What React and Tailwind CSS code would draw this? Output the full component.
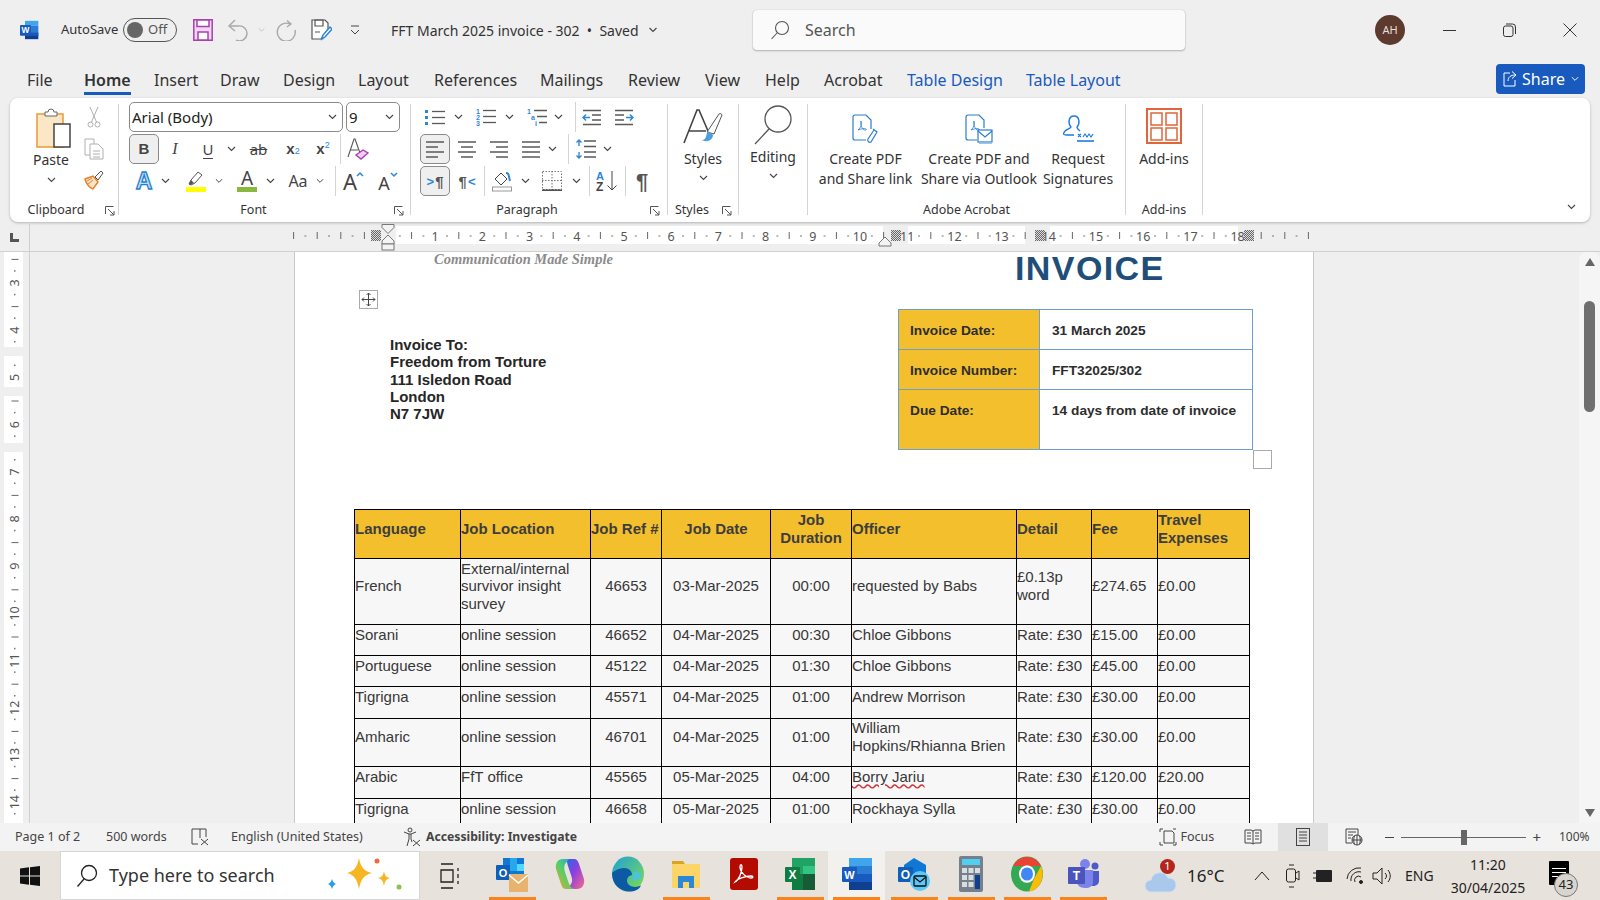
import clsx from 'clsx'

const UI = "font-['Noto_Sans',sans-serif]"
const ARIAL = "font-['Liberation_Sans',Arial,sans-serif]"
const GRAY = '#5a5a5a'
const BLUE = '#2b88d8'

// ---------- small shared icons ----------
const Chev = ({ color = '#444', w = 9 }) => (
  <svg width={w} height="6" viewBox="0 0 9 6"><path d="M1 1l3.5 3.5L8 1" fill="none" stroke={color} strokeWidth="1.1" /></svg>
)
const Launcher = () => (
  <svg width="10" height="10" viewBox="0 0 10 10" fill="none" stroke="#555"><path d="M.5 8V.5h8" /><path d="M3 3l6 6M9 5v4H5" /></svg>
)
const Slot = ({ className, children, active }) => (
  <div className={clsx('flex h-[30px] shrink-0 items-center justify-center', active && 'rounded-[5px] border border-[#8a8a8a] bg-[#efefef]', className)}>{children}</div>
)
const VSep = ({ className }) => <div className={clsx('h-[30px] w-px shrink-0 bg-[#d4d4d4]', className)} />

// ---------- title bar icons ----------
const WordLogo = ({ size = 20 }) => (
  <svg width={size} height={size} viewBox="0 0 24 24" overflow="visible">
    <rect x="6" y="1" width="16" height="6" fill="#41a5ee" />
    <rect x="6" y="7" width="16" height="8" fill="#2b7cd3" />
    <rect x="6" y="15" width="16" height="8" fill="#103f91" />
    <rect x="6" y="15" width="16" height="4" fill="#185abd" />
    <rect x="0" y="6" width="13" height="13" fill="#185abd" rx="1" />
    <text x="6.5" y="16" textAnchor="middle" fontSize="10" fontWeight="700" fill="#fff" fontFamily="Liberation Sans">W</text>
  </svg>
)
const SaveIcon = () => (
  <svg width="20" height="22" viewBox="0 0 20 22"><path d="M.8.8h18.4v20.4H.8z" fill="#f2d7f0" stroke="#a93fb0" strokeWidth="1.5" /><path d="M4 1h12v6.5H4zM5 13h10v8H5z" fill="#fff" stroke="#a93fb0" strokeWidth="1.5" /></svg>
)
const UndoIcon = () => (
  <svg width="22" height="22" viewBox="0 0 22 22" fill="none" stroke="#a8a8a8" strokeWidth="1.4"><path d="M8 1L2 7l6 5" /><path d="M2 7h9a7.5 7.5 0 1 1-2 14" /></svg>
)
const RedoIcon = () => (
  <svg width="22" height="22" viewBox="0 0 22 22" fill="none" stroke="#a8a8a8" strokeWidth="1.4"><path d="M12 1.5l4 3.5-4 3" /><path d="M15 5a9 9 0 1 0 5 6" /></svg>
)
const ReviewIcon = () => (
  <svg width="22" height="22" viewBox="0 0 22 22" fill="none"><path d="M2 1h13l3 3v6l-7 10H2z" fill="#fff" stroke="#555" strokeWidth="1.2" /><path d="M5 1h8v6H5zM5 13h5" stroke="#555" strokeWidth="1.2" /><path d="M12 20l1-4 7-8 2 2-7 8z" fill="#fff" stroke="#2b88d8" strokeWidth="1.5" /></svg>
)

const TitleBar = () => (
  <div className="flex h-[60px] shrink-0 items-center">
    <div className="flex w-[753px] shrink-0 items-center pl-[20px]">
      <WordLogo />
      <span className="ml-[21px] w-[54px] text-[13px] text-[#333]">AutoSave</span>
      <div className="ml-[8px] flex h-[24px] w-[54px] items-center rounded-full border border-[#555] pl-[3px]">
        <div className="h-[16px] w-[16px] rounded-full bg-[#666]" />
        <span className="ml-[5px] text-[13px] text-[#555]">Off</span>
      </div>
      <div className="ml-[16px]"><SaveIcon /></div>
      <div className="ml-[14px]"><UndoIcon /></div>
      <div className="ml-[9px]"><Chev color="#bbb" w={7} /></div>
      <div className="ml-[10px]"><RedoIcon /></div>
      <div className="ml-[13px]"><ReviewIcon /></div>
      <svg className="ml-[18px]" width="10" height="11" viewBox="0 0 10 11" fill="none" stroke="#444"><path d="M1 1h8M1 5l4 4 4-4" /></svg>
      <span className="ml-[31px] text-[14px] text-[#333]">FFT March 2025 invoice - 302 &nbsp;•&nbsp; Saved</span>
      <div className="ml-[8px]"><Chev w={12} /></div>
    </div>
    <div className="flex h-[40px] w-[432px] items-center rounded-[4px] bg-[#fafafa] pl-[17px] shadow-[0_1px_2px_#00000040,0_0_1px_#00000040]">
      <svg width="20" height="20" viewBox="0 0 20 20" fill="none" stroke="#555" strokeWidth="1.1"><circle cx="12" cy="8" r="6.5" /><path d="M7.5 12.5L1.5 19" /></svg>
      <span className="ml-[15px] text-[16px] text-[#555]">Search</span>
    </div>
    <div className="ml-[190px] flex h-[30px] w-[30px] items-center justify-center rounded-full bg-[#5d3a2e] text-[11px] text-[#e8ddd8]">AH</div>
    <div className="ml-[38px] h-px w-[13px] bg-[#333]" />
    <svg className="ml-[47px]" width="13" height="14" viewBox="0 0 13 14" fill="none" stroke="#333"><rect x=".5" y="3" width="9.5" height="10.5" rx="2" /><path d="M3 1h6.5A3 3 0 0 1 12.500 4v7" /></svg>
    <svg className="ml-[47px]" width="14" height="14" viewBox="0 0 14 14" stroke="#333"><path d="M.5.5l13 13M13.500.5l-13 13" /></svg>
  </div>
)

// ---------- tabs ----------
const TABS = [
  ['File', 'w-[57px]'], ['Home', 'w-[70px]'], ['Insert', 'w-[66px]'], ['Draw', 'w-[63px]'], ['Design', 'w-[75px]'],
  ['Layout', 'w-[76px]'], ['References', 'w-[106px]'], ['Mailings', 'w-[88px]'], ['Review', 'w-[77px]'], ['View', 'w-[60px]'],
  ['Help', 'w-[59px]'], ['Acrobat', 'w-[83px]'], ['Table Design', 'w-[119px]'], ['Table Layout', 'w-[120px]'],
]
const Tabs = () => (
  <div className="flex h-[38px] shrink-0 items-start pl-[27px] pr-[15px] pt-[8px] text-[16px] text-[#333]">
    {TABS.map(([t, w]) => (
      <div key={t} className={clsx('shrink-0', w)}>
        <span className={clsx('inline-block leading-[24px]',
          t === 'Home' && 'border-b-[3px] border-[#185abd] font-semibold',
          t.startsWith('Table') && 'text-[#185abd]')}>{t}</span>
      </div>
    ))}
    <div className="ml-auto -mt-[4px] flex h-[30px] w-[89px] items-center rounded-[4px] bg-[#185abd] pl-[7px] text-[16px] text-white">
      <svg width="14" height="18" viewBox="0 0 14 18" fill="none" stroke="#fff"><path d="M7 3H1v13h11v-6" /><path d="M5 11c0-4 3-6 7-6M9 1.500l4 3.500-4 3.500" /></svg>
      <span className="ml-[5px]">Share</span>
      <div className="ml-[6px]"><Chev color="#fff" w={8} /></div>
    </div>
  </div>
)

// ---------- ribbon icons ----------
const PasteIcon = () => (
  <svg width="36" height="40" viewBox="0 0 36 40" fill="none">
    <path d="M1 6h26v33H1z" fill="#fbe6c6" stroke="#ec9b35" strokeWidth="1.5" />
    <path d="M9 7V4h3a3 3 0 0 1 6 0h3v4H9z" fill="#fff" stroke="#666" />
    <rect x="18" y="16" width="16" height="23" fill="#fff" stroke="#444" strokeWidth="1.5" />
  </svg>
)
const ScissorsIcon = () => (
  <svg width="14" height="22" viewBox="0 0 14 22" fill="none" stroke="#b0b0b0"><path d="M3 1l6.500 15M11 1L4.500 16" /><circle cx="3.500" cy="18.500" r="2.500" /><circle cx="10.500" cy="18.500" r="2.500" /></svg>
)
const CopyIcon = () => (
  <svg width="20" height="22" viewBox="0 0 20 22" fill="#fff" stroke="#b0b0b0"><path d="M1 1h9v16H1z" /><path d="M6 6h8l5 5v10H6z" /><path d="M9 13h7M9 16h7M9 19h7" /></svg>
)
const PainterIcon = () => (
  <svg width="20" height="20" viewBox="0 0 20 20" fill="none"><path d="M1 9l8-3 5 6-5 7c-3-1-7-5-8-10z" fill="#fbe3c8" stroke="#e67e22" strokeWidth="1.4" /><path d="M4 14l5-4M3 11l5-3" stroke="#e67e22" /><path d="M11 7l6-6 2 2-5 7z" fill="#fff" stroke="#555" /></svg>
)
const EraserA = () => (
  <svg width="22" height="24" viewBox="0 0 22 24" fill="none"><path d="M1 20L7 2h1l5 14" stroke="#555" strokeWidth="1.100" /><path d="M3 13h8" stroke="#555" /><path d="M9 18l7-5 5 3-7 6z" fill="#f1d0ee" stroke="#a93fb0" strokeWidth="1.400" /></svg>
)
const BigA = () => (
  <svg width="20" height="22" viewBox="0 0 20 22" overflow="visible"><text x="10" y="19" textAnchor="middle" fontSize="23" fontWeight="700" fontFamily="Liberation Sans" fill="#bfe0f8" stroke="#1f7fd1" strokeWidth="1.300">A</text></svg>
)
const Highlighter = () => (
  <svg width="20" height="22" viewBox="0 0 20 22"><path d="M3 14l2-4 7-8 4 3-7 8-4 2z" fill="#fff" stroke="#555" /><path d="M3 14l2-4 3 3-4 2z" fill="#555" /><rect y="17" width="20" height="5" fill="#ffff00" /></svg>
)
const ColorA = () => (
  <svg width="20" height="22" viewBox="0 0 20 22" overflow="visible"><text x="10" y="15" textAnchor="middle" fontSize="19" fontFamily="Noto Sans" fill="#444">A</text><rect y="17" width="20" height="5" fill="#8ab83f" /></svg>
)
const GrowA = ({ up }) => (
  <svg width="24" height="22" viewBox="0 0 24 22" overflow="visible">
    <text x="9" y="20" textAnchor="middle" fontSize={up ? 22 : 18} fontFamily="Noto Sans" fill="#444">A</text>
    <path d={up ? 'M16 6l3-3 3 3' : 'M16 3l3 3 3-3'} fill="none" stroke={BLUE} strokeWidth="1.500" />
  </svg>
)
const ListLines = ({ rows = [2, 8, 14], x = 7 }) => (
  <g stroke={GRAY} strokeWidth="1.300">{rows.map(y => <path key={y} d={`M${x} ${y + .5}h13`} />)}</g>
)
const Bullets = () => (
  <svg width="21" height="17" viewBox="0 0 21 17"><g fill={BLUE}><rect y="1" width="3" height="3" /><rect y="7" width="3" height="3" /><rect y="13" width="3" height="3" /></g><ListLines /></svg>
)
const Numbers = () => (
  <svg width="21" height="18" viewBox="0 0 21 18" overflow="visible"><g fill={BLUE} fontSize="7" fontWeight="700" fontFamily="Liberation Sans"><text x="0" y="6">1</text><text x="0" y="12">2</text><text x="0" y="18">3</text></g><ListLines /></svg>
)
const Multi = () => (
  <svg width="21" height="18" viewBox="0 0 21 18" overflow="visible"><g fill={BLUE} fontSize="7" fontWeight="700" fontFamily="Liberation Sans"><text x="0" y="6">1</text><text x="4" y="12">a</text><text x="8" y="18">i</text></g><path d="M7 2.500h13M10 8.500h10M12 14.500h8" stroke={GRAY} strokeWidth="1.300" /></svg>
)
const Indent = ({ flip }) => (
  <svg width="20" height="17" viewBox="0 0 20 17"><g transform={flip ? 'translate(20 0) scale(-1 1)' : undefined}><path d="M1 1.500h18M1 15.500h18M10 6h9M10 11h9" stroke={GRAY} strokeWidth="1.300" fill="none" /><path d="M8 8.500H1M4 5.500l-3 3 3 3" stroke={BLUE} strokeWidth="1.500" fill="none" /></g></svg>
)
const Align = ({ lines }) => (
  <svg width="20" height="18" viewBox="0 0 20 18"><path d={lines} stroke={GRAY} strokeWidth="1.500" /></svg>
)
const SpacingIcon = () => (
  <svg width="20" height="20" viewBox="0 0 20 20"><path d="M8 2h12M8 7.500h12M8 13h12M8 18h12" stroke={GRAY} strokeWidth="1.400" /><path d="M3 1v6M3 13v6M.5 3.500L3 1l2.500 2.500M.5 16.500L3 19l2.500-2.500" stroke={BLUE} strokeWidth="1.400" fill="none" /></svg>
)
const Para = ({ dir }) => (
  <span className={clsx(ARIAL, 'flex items-center text-[15px] font-bold leading-none text-[#555]')}>
    {dir === 'ltr' && <span className="mr-px text-[13px] text-[#2b88d8]">&gt;</span>}
    ¶
    {dir === 'rtl' && <span className="ml-px text-[13px] text-[#2b88d8]">&lt;</span>}
  </span>
)
const Shading = () => (
  <svg width="20" height="22" viewBox="0 0 20 22" fill="none"><path d="M3 9l6-6 6 6-6 6z" fill="#fff" stroke="#444" /><path d="M14 3c2 0 3 2 3 4l1 4" stroke={BLUE} strokeWidth="2" /><rect x=".5" y="17" width="19" height="4" fill="#fff" stroke="#999" /></svg>
)
const Borders = () => (
  <svg width="20" height="20" viewBox="0 0 20 20" fill="none" stroke="#777" strokeDasharray="1.500 1.500"><rect x=".5" y=".5" width="19" height="18" /><path d="M10 0v19M0 9.500h20" /><path d="M0 19.200h20" stroke="#333" strokeWidth="1.300" strokeDasharray="none" /></svg>
)
const SortIcon = () => (
  <svg width="22" height="22" viewBox="0 0 22 22" overflow="visible"><text x="0" y="10" fontSize="11" fontWeight="700" fill={BLUE} fontFamily="Liberation Sans">A</text><text x="0" y="21" fontSize="12" fontWeight="700" fill="#444" fontFamily="Liberation Sans">Z</text><path d="M16 1v19M11.500 15.500L16 20l4.500-4.500" stroke="#444" fill="none" /></svg>
)
const StylesIcon = () => (
  <svg width="40" height="40" viewBox="0 0 40 40" fill="none"><path d="M1 36L14 3h2l12 28M6 24h17" stroke="#444" strokeWidth="1.600" /><path d="M24 25L36 7c1-1 3 0 3 1l-8 19z" fill="#fff" stroke="#555" /><path d="M19 33c5 0 4-7 6-9l5 4c0 5-6 8-11 5z" fill="#4f9fe0" /></svg>
)
const Magnifier = () => (
  <svg width="38" height="40" viewBox="0 0 38 40" fill="none" stroke="#555" strokeWidth="1.300"><circle cx="24" cy="14" r="13" /><path d="M15 24L1 39" /></svg>
)
const PdfLink = () => (
  <svg width="28" height="30" viewBox="0 0 28 30" fill="none" stroke="#2b7cd3" strokeWidth="1.200"><path d="M3 1h11l5 5v9M3 1a2 2 0 0 0-2 2v21a2 2 0 0 0 2 2h11" /><path d="M6 16c3-2 4-7 3-9-1 0 0 6 2 8s4 1 3 0-6 0-8 1z" strokeWidth=".8" /><path d="M21 15l4 3-6 10c-2 1-4-1-3-3l6-9" /></svg>
)
const PdfMail = () => (
  <svg width="28" height="30" viewBox="0 0 28 30" fill="none" stroke="#2b7cd3" strokeWidth="1.200"><path d="M3 1h11l5 5v8M3 1a2 2 0 0 0-2 2v21a2 2 0 0 0 2 2h9" /><path d="M6 16c3-2 4-7 3-9-1 0 0 6 2 8s4 1 3 0-6 0-8 1z" strokeWidth=".8" /><rect x="13" y="16" width="14" height="12" fill="#fff" /><path d="M13 17l7 6 7-6" /><path d="M14 29.500h13" strokeWidth="1.600" stroke="#9ec5ee" /></svg>
)
const SignIcon = () => (
  <svg width="32" height="28" viewBox="0 0 32 28" fill="none" stroke="#1f7ae0" strokeWidth="1.400"><path d="M2 19c0-3 6-4 7-6-3-3-3-11 3-11s6 8 3 11c0 2 2 3 3 4M2 19c-1 1 0 2 2 2h8" /><path d="M16 20l3 3M19 20l-3 3M21 23l2-3 2 3 2-3 2 3 2-3" strokeWidth="1.100" /><path d="M15 27h17" strokeWidth="1.600" /></svg>
)
const AddinsIcon = () => (
  <svg width="36" height="36" viewBox="0 0 36 36" fill="none" stroke="#e0653a" strokeWidth="1.500"><rect x="1" y="1" width="34" height="34" strokeWidth="2" /><rect x="5" y="5" width="11" height="12" /><rect x="20" y="5" width="11" height="12" /><rect x="5" y="20" width="11" height="12" /><rect x="20" y="20" width="11" height="12" /></svg>
)

// ---------- ribbon ----------
const Group = ({ className, label, launcher, children }) => (
  <div className={clsx('flex shrink-0', className)}>
    <div className="flex min-w-0 flex-1 flex-col">
      <div className="h-[101px]">{children}</div>
      <div className="flex h-[15px] items-center text-[12.5px] leading-none text-[#333]">
        <span className="flex-1 text-center">{label}</span>
        {launcher && <div className={clsx('flex justify-center', launcher)}><Launcher /></div>}
      </div>
    </div>
    <div className="mt-[2px] h-[111px] w-px bg-[#d4d4d4]" />
  </div>
)

const Combo = ({ className, text }) => (
  <div className={clsx('flex h-[30px] items-center justify-between rounded-[5px] border border-[#8a8a8a] pl-[2px] pr-[5px] text-[15px] text-[#222]', className)}>
    {text}<Chev />
  </div>
)

const BigBtn = ({ className, icon, lines, chevron, top = 'h-[44px]', chevGap = 'mt-[5px]' }) => (
  <div className={clsx('flex flex-col items-center text-center', className)}>
    <div className={clsx('flex items-end justify-center', top)}>{icon}</div>
    {lines.map(l => <div key={l} className="whitespace-nowrap text-[14px] leading-[20px] text-[#333]">{l}</div>)}
    {chevron && <div className={chevGap}><Chev /></div>}
  </div>
)

const Ribbon = () => (
  <div className="mx-[10px] flex h-[124px] shrink-0 rounded-[8px] bg-white pt-[4px] shadow-[0_1px_3px_#00000040]">
    <Group className="w-[109px]" label="Clipboard" launcher="w-[16px]">
      <div className="flex">
        <BigBtn className="ml-[8px] w-[66px]" top="h-[48px] pb-[2px] pl-[6px]" chevGap="mt-[7px]" icon={<PasteIcon />} lines={['Paste']} chevron />
        <div className="flex w-[20px] flex-col items-center gap-[10px] pt-[4px]">
          <ScissorsIcon /><CopyIcon /><PainterIcon />
        </div>
      </div>
    </Group>

    <Group className="w-[292px]" label="Font" launcher="w-[22px]">
      <div className="flex flex-col gap-[2px] pl-[10px] text-[#444]">
        <div className="flex gap-[3px]">
          <Combo className="w-[214px]" text="Arial (Body)" />
          <Combo className="w-[54px]" text="9" />
        </div>
        <div className="flex">
          <Slot active className={clsx('w-[30px] text-[15px] font-bold', ARIAL)}>B</Slot>
          <Slot className="w-[32px] text-[16px] italic font-['Liberation_Serif',serif]">I</Slot>
          <Slot className="w-[34px] text-[15px]"><span className="border-b border-[#444] leading-[18px]">U</span></Slot>
          <Slot className="w-[12px]"><Chev /></Slot>
          <Slot className="w-[43px] text-[15px] line-through">ab</Slot>
          <Slot className={clsx('w-[26px] text-[15px] font-bold', ARIAL)}>x<sub className="text-[9px] font-normal text-[#2b88d8]">2</sub></Slot>
          <Slot className={clsx('w-[34px] text-[15px] font-bold', ARIAL)}>x<sup className="text-[9px] font-normal text-[#2b88d8]">2</sup></Slot>
          <VSep />
          <Slot className="w-[34px]"><EraserA /></Slot>
        </div>
        <div className="flex">
          <Slot className="w-[30px]"><BigA /></Slot>
          <Slot className="w-[12px]"><Chev /></Slot>
          <Slot className="ml-[6px] w-[38px]"><Highlighter /></Slot>
          <Slot className="w-[8px]"><Chev /></Slot>
          <Slot className="ml-[6px] w-[36px]"><ColorA /></Slot>
          <Slot className="w-[10px]"><Chev /></Slot>
          <Slot className="ml-[5px] w-[36px] text-[16px]">Aa</Slot>
          <Slot className="w-[8px]"><Chev /></Slot>
          <VSep className="ml-[11px]" />
          <Slot className="w-[34px]"><GrowA up /></Slot>
          <Slot className="w-[34px]"><GrowA /></Slot>
        </div>
      </div>
    </Group>

    <Group className="w-[257px]" label="Paragraph" launcher="w-[24px]">
      <div className="flex flex-col gap-[2px] pl-[9px]">
        <div className="flex">
          <Slot className="w-[30px]"><Bullets /></Slot>
          <Slot className="ml-[2px] w-[12px]"><Chev /></Slot>
          <Slot className="ml-[7px] w-[30px]"><Numbers /></Slot>
          <Slot className="ml-[2px] w-[12px]"><Chev /></Slot>
          <Slot className="ml-[7px] w-[30px]"><Multi /></Slot>
          <Slot className="w-[12px]"><Chev /></Slot>
          <VSep className="ml-[11px]" />
          <Slot className="w-[32px]"><Indent /></Slot>
          <Slot className="w-[32px]"><Indent flip /></Slot>
        </div>
        <div className="flex">
          <Slot active className="w-[30px]"><Align lines="M1 2h18M1 7h12M1 12h18M1 17h12" /></Slot>
          <Slot className="ml-[2px] w-[30px]"><Align lines="M1 2h18M4 7h12M1 12h18M4 17h12" /></Slot>
          <Slot className="ml-[2px] w-[30px]"><Align lines="M1 2h18M7 7h12M1 12h18M7 17h12" /></Slot>
          <Slot className="ml-[2px] w-[30px]"><Align lines="M1 2h18M1 7h18M1 12h18M1 17h18" /></Slot>
          <Slot className="w-[12px]"><Chev /></Slot>
          <VSep className="ml-[10px]" />
          <Slot className="ml-[2px] w-[30px]"><SpacingIcon /></Slot>
          <Slot className="w-[12px]"><Chev /></Slot>
        </div>
        <div className="flex">
          <Slot active className="w-[30px]"><Para dir="ltr" /></Slot>
          <Slot className="ml-[2px] w-[30px]"><Para dir="rtl" /></Slot>
          <VSep className="ml-[2px]" />
          <Slot className="ml-[2px] w-[30px]"><Shading /></Slot>
          <Slot className="ml-[2px] w-[12px]"><Chev /></Slot>
          <Slot className="ml-[6px] w-[30px]"><Borders /></Slot>
          <Slot className="ml-[3px] w-[12px]"><Chev /></Slot>
          <VSep className="ml-[7px]" />
          <Slot className="ml-[2px] w-[30px]"><SortIcon /></Slot>
          <VSep className="ml-[3px]" />
          <Slot className={clsx('ml-px w-[30px] text-[22px] font-bold text-[#555]', ARIAL)}>¶</Slot>
        </div>
      </div>
    </Group>

    <Group className="w-[71px]" label="Styles" launcher="w-[22px]">
      <BigBtn top="h-[47px] pb-[2px]" chevGap="mt-[6px]" icon={<StylesIcon />} lines={['Styles']} chevron />
    </Group>

    <Group className="w-[69px]" label="">
      <BigBtn top="h-[45px] pb-[2px]" chevGap="mt-[6px]" icon={<Magnifier />} lines={['Editing']} chevron />
    </Group>

    <Group className="w-[318px]" label="Adobe Acrobat">
      <div className="flex">
        <BigBtn className="w-[115px]" top="h-[47px] pb-[5px]" icon={<PdfLink />} lines={['Create PDF', 'and Share link']} />
        <BigBtn className="w-[112px]" top="h-[47px] pb-[5px]" icon={<PdfMail />} lines={['Create PDF and', 'Share via Outlook']} />
        <BigBtn className="w-[86px]" top="h-[47px] pb-[7px]" icon={<SignIcon />} lines={['Request', 'Signatures']} />
      </div>
    </Group>

    <Group className="w-[77px]" label="Add-ins">
      <BigBtn top="h-[47px] pb-[5px]" icon={<AddinsIcon />} lines={['Add-ins']} />
    </Group>

    <div className="flex flex-1 items-end justify-end pb-[12px] pr-[12px]"><Chev w={13} /></div>
  </div>
)

// ---------- rulers ----------
const Hatch = ({ x }) => <rect x={x - 5} y="230" width="10" height="11" fill="url(#hatch)" />

const HRuler = () => {
  const marks = []
  for (let k = -8; k <= 78; k++) {
    const x = 389 + 11.8 * k
    if (k === 0) continue
    if (k > 0 && k <= 72 && k % 4 === 0) {
      marks.push(<text key={k} x={x} y="240.500" textAnchor="middle" fontSize="12.500" fill="#555" fontFamily="Noto Sans">{k / 4}</text>)
    } else if (k % 2 === 0) {
      marks.push(<path key={k} d={`M${x} 232v7`} stroke="#666" />)
    } else {
      marks.push(<rect key={k} x={x - 1} y="235.500" width="2" height="1" fill="#777" />)
    }
  }
  return (
    <svg width="1570" height="30" viewBox="30 222 1570 30" className="block">
      <defs>
        <pattern id="hatch" width="2" height="2" patternUnits="userSpaceOnUse">
          <rect width="2" height="2" fill="#ddd" /><rect width="1" height="1" fill="#666" /><rect x="1" y="1" width="1" height="1" fill="#666" />
        </pattern>
      </defs>
      <rect x="397" y="226" width="487" height="18" fill="#fff" />
      <rect x="909" y="226" width="117" height="18" fill="#fff" />
      <rect x="1051" y="226" width="188" height="18" fill="#fff" />
      {marks}
      <Hatch x={377} /><Hatch x={897} /><Hatch x={1041} /><Hatch x={1250} />
      <path d="M383 224.500h12v3l-6 6-6-6zM389 235l6 6v3h-12v-3z" fill="#f4f4f4" stroke="#777" />
      <rect x="383" y="244" width="12" height="6" fill="#f4f4f4" stroke="#777" />
      <path d="M886 237l6 6v3h-12v-3z" fill="#f4f4f4" stroke="#777" />
    </svg>
  )
}

const VRuler = () => {
  const gaps = [[347, 356], [387, 396], [443, 452]]
  const marks = []
  for (let k = -2; k <= 46; k++) {
    const y = 283 + 11.8 * k
    if (gaps.some(([a, b]) => y > a && y < b)) continue
    if (k % 4 === 0) {
      const n = k / 4 + 3
      marks.push(<text key={k} x="14.500" y={y} transform={`rotate(-90 14.500 ${y})`} dy="4.500" textAnchor="middle" fontSize="12.500" fill="#555" fontFamily="Noto Sans">{n}</text>)
    } else if (k % 2 === 0) {
      marks.push(<path key={k} d={`M11.500 ${y}h7`} stroke="#666" />)
    } else {
      marks.push(<rect key={k} x="14" y={y - 1} width="1.500" height="1.500" fill="#777" />)
    }
  }
  return (
    <svg width="29" height="571" viewBox="0 252 29 571" className="block shrink-0">
      <rect x="4" y="252" width="19" height="95" fill="#fff" />
      <rect x="4" y="356" width="19" height="31" fill="#fff" />
      <rect x="4" y="396" width="19" height="47" fill="#fff" />
      <rect x="4" y="452" width="19" height="371" fill="#fff" />
      {marks}
    </svg>
  )
}

const RulerRow = () => (
  <div className="flex h-[30px] shrink-0 border-b border-[#d0d0d0]">
    <div className="flex w-[30px] shrink-0 items-center justify-center border-r border-[#d0d0d0]">
      <svg width="9" height="9" viewBox="0 0 9 9" className="mr-px mt-[2px]"><path d="M0 0h3v6h6v3H0z" fill="#555" /></svg>
    </div>
    <div className="-ml-px"><HRuler /></div>
  </div>
)

// ---------- document ----------
const HEAD = [
  ['Language', 'w-[106px]', 'text-left'], ['Job Location', 'w-[130px]', 'text-left'], ['Job Ref #', 'w-[71px]', 'text-left'],
  ['Job Date', 'w-[109px]', 'text-center'], ['Job Duration', 'w-[81px]', 'text-center'], ['Officer', 'w-[165px]', 'text-left'],
  ['Detail', 'w-[75px]', 'text-left'], ['Fee', 'w-[66px]', 'text-left'], ['Travel Expenses', 'w-[92px]', 'text-left'],
]
const ROWS = [
  ['h-[66px]', 'French', 'External/internal survivor insight survey', '46653', '03-Mar-2025', '00:00', 'requested by Babs', '£0.13p word', '£274.65', '£0.00'],
  ['h-[31px]', 'Sorani', 'online session', '46652', '04-Mar-2025', '00:30', 'Chloe Gibbons', 'Rate: £30', '£15.00', '£0.00'],
  ['h-[31px]', 'Portuguese', 'online session', '45122', '04-Mar-2025', '01:30', 'Chloe Gibbons', 'Rate: £30', '£45.00', '£0.00'],
  ['h-[32px]', 'Tigrigna', 'online session', '45571', '04-Mar-2025', '01:00', 'Andrew Morrison', 'Rate: £30', '£30.00', '£0.00'],
  ['h-[48px]', 'Amharic', 'online session', '46701', '04-Mar-2025', '01:00', 'William Hopkins/Rhianna Brien', 'Rate: £30', '£30.00', '£0.00'],
  ['h-[32px]', 'Arabic', 'FfT office', '45565', '05-Mar-2025', '04:00', 'Borry Jariu', 'Rate: £30', '£120.00', '£20.00'],
  ['h-[32px]', 'Tigrigna', 'online session', '46658', '05-Mar-2025', '01:00', 'Rockhaya Sylla', 'Rate: £30', '£30.00', '£0.00'],
]

const InvoiceMeta = () => (
  <table className="w-[355px] table-fixed border-collapse text-[13.7px] font-bold text-[#2d2d2d]">
    <tbody>
      {[['Invoice Date:', '31 March 2025', 'h-[40px]'], ['Invoice Number:', 'FFT32025/302', 'h-[40px]'], ['Due Date:', '14 days from date of invoice', 'h-[60px]']].map(([a, b, h]) => (
        <tr key={a} className={h}>
          <td className="w-[141px] border border-[#6a9fcf] bg-[#f4bf2c] pl-[11px] pt-[13px] align-top leading-[16px]">{a}</td>
          <td className="border border-[#6a9fcf] bg-white pl-[12px] pt-[13px] align-top leading-[16px]">{b}</td>
        </tr>
      ))}
    </tbody>
  </table>
)

const Page = () => (
  <div className={clsx('relative h-[571px] w-[1020px] shrink-0 border-x border-[#c8c8c8] bg-white pl-[59px]', ARIAL)}>
    <div className="flex h-[57px]">
      <div className="w-[661px] pl-[80px] font-['Liberation_Serif',serif] text-[14.5px] font-bold italic leading-[14px] text-[#8c8c8c]">Communication Made Simple</div>
      <div className="mt-[1px] text-[34px] font-bold leading-[30px] tracking-[1.4px] text-[#1f4e79]">INVOICE</div>
    </div>
    <div className="flex">
      <div className="w-[544px] pl-[36px] pt-[27px] text-[15px] font-bold leading-[17.3px] text-[#262626]">
        <div>Invoice To:</div><div>Freedom from Torture</div><div>111 Isledon Road</div><div>London</div><div>N7 7JW</div>
      </div>
      <InvoiceMeta />
    </div>
    {/* table selection handles */}
    <div className="absolute left-[64px] top-[38px] flex h-[19px] w-[19px] items-center justify-center border border-[#aaa] bg-white">
      <svg width="15" height="15" viewBox="0 0 15 15" fill="none" stroke="#444"><path d="M7.500 1v13M1 7.500h13M5.500 3l2-2 2 2M5.500 12l2 2 2-2M3 5.500l-2 2 2 2M12 5.500l2 2-2 2" /></svg>
    </div>
    <div className="absolute left-[958px] top-[198px] h-[19px] w-[19px] border border-[#aaa] bg-white" />

    <div className="mt-[59px] h-[314px] w-[897px] overflow-hidden">
      <table className="w-[896px] table-fixed border-collapse text-[15px] leading-[17.6px] text-[#383838]">
        <thead>
          <tr className="h-[49px]">
            {HEAD.map(([t, w, a]) => (
              <th key={t} className={clsx('border border-black bg-[#f4bf2c] px-0 pb-[11px] font-bold text-[#3d3d3d]', w, a)}>{t}</th>
            ))}
          </tr>
        </thead>
        <tbody>
          {ROWS.map(([h, ...cells], i) => (
            <tr key={i} className={h}>
              {cells.map((c, j) => (
                <td key={j} className={clsx('border border-black bg-[#f7f7f7] px-0 pb-[11px] align-middle', (j === 2 || j === 3 || j === 4) && 'text-center')}>
                  {c === 'Borry Jariu' ? <span className="underline decoration-[#d13438] decoration-wavy">{c}</span> : c}
                </td>
              ))}
            </tr>
          ))}
        </tbody>
      </table>
    </div>
  </div>
)

const Scrollbar = () => (
  <div className="flex h-[571px] w-[21px] flex-col items-center rounded-t-[8px] bg-[#f5f5f5] pt-[6px]">
    <div className="h-0 w-0 border-x-[5.5px] border-b-[8px] border-x-transparent border-b-[#666]" />
    <div className="mt-[35px] h-[111px] w-[11px] rounded-full bg-[#6f6f6f]" />
    <div className="mb-[6px] mt-auto h-0 w-0 border-x-[5.5px] border-t-[8px] border-x-transparent border-t-[#666]" />
  </div>
)

const DocArea = () => (
  <div className="flex h-[571px] shrink-0">
    <VRuler />
    <div className="h-full w-[265px] border-l border-[#d0d0d0]" />
    <Page />
    <div className="w-[265px]" />
    <Scrollbar />
  </div>
)

// ---------- status bar ----------
const StatusBar = () => (
  <div className="flex h-[28px] shrink-0 items-center bg-[#f3f3f3] text-[12.5px] text-[#444]">
    <span className="ml-[15px] w-[91px]">Page 1 of 2</span>
    <span className="w-[85px]">500 words</span>
    <svg width="18" height="18" viewBox="0 0 18 18" fill="none" stroke="#444"><path d="M9 1H1v15h6M9 1h6v8M9 1v9" /><path d="M10 11l7 6M17 11l-7 6" /></svg>
    <span className="ml-[22px] w-[172px]">English (United States)</span>
    <svg width="18" height="20" viewBox="0 0 18 20" fill="none" stroke="#444"><circle cx="7" cy="3" r="2" /><path d="M1 5l5 2h2l5-2M6 7v5l-2 7M8 7v5l1 3M10 13l7 6M17 13l-7 6" /></svg>
    <span className="ml-[5px] text-[12.2px] font-bold">Accessibility: Investigate</span>
    <div className="ml-auto flex h-full items-center">
      <svg width="18" height="18" viewBox="0 0 18 18" fill="none" stroke="#444"><path d="M5 3h8l2 2v10H5zM1 1h3M1 1v3M17 1h-3M1 17h3M1 17v-3M17 17h-3M17 17v-3" /></svg>
      <span className="ml-[3px] w-[64px]">Focus</span>
      <svg width="18" height="16" viewBox="0 0 18 16" fill="none" stroke="#444"><path d="M1 1h6l2 1 2-1h6v13h-6l-2 1-2-1H1zM9 2v13M3 4h4M3 7h4M3 10h4M11 4h4M11 7h4M11 10h4" /></svg>
      <div className="ml-[16px] flex h-full w-[50px] items-center justify-center bg-[#e0e0e0]">
        <svg width="14" height="18" viewBox="0 0 14 18" fill="none" stroke="#444"><rect x=".5" y=".5" width="13" height="17" /><path d="M3 4h8M3 7h8M3 10h8M3 13h8" /></svg>
      </div>
      <svg className="ml-[17px]" width="18" height="18" viewBox="0 0 18 18" fill="none" stroke="#444"><path d="M1 1h12v7M1 1v14h6M3 4h8M3 7h5M3 10h3" /><circle cx="12" cy="12" r="5" fill="#f3f3f3" /><path d="M7 12h10M12 7v10M9.500 8c-1 2-1 6 0 8M14.500 8c1 2 1 6 0 8" /></svg>
      <div className="ml-[22px] h-px w-[9px] bg-[#444]" />
      <div className="ml-[7px] flex h-[15px] w-[125px] items-center">
        <div className="h-px w-[60px] bg-[#666]" />
        <div className="h-[15px] w-[6px] bg-[#666]" />
        <div className="h-px flex-1 bg-[#666]" />
      </div>
      <span className="ml-[6px] text-[15px] leading-none">+</span>
      <span className="ml-[18px] mr-[10px] w-[31px] text-[12px]">100%</span>
    </div>
  </div>
)

// ---------- taskbar ----------
const OutlookIcon = () => (
  <svg width="32" height="36" viewBox="0 0 32 36" overflow="visible">
    <rect x="7" y="2" width="21" height="20" fill="#0f78d4" /><rect x="14" y="8" width="7" height="7" fill="#28a8ea" /><rect x="21" y="8" width="7" height="7" fill="#50d9ff" /><rect x="14" y="2" width="7" height="6" fill="#28a8ea" />
    <rect x="0" y="9" width="14" height="15" rx="1" fill="#0f5fb8" /><text x="7" y="21" textAnchor="middle" fontSize="11" fontWeight="700" fill="#fff" fontFamily="Liberation Sans">O</text>
    <rect x="13" y="18" width="19" height="18" fill="#e8b26f" /><path d="M13 19l9.500 8L32 19" fill="none" stroke="#fff" strokeWidth="1.500" />
  </svg>
)
const CopilotIcon = () => (
  <svg width="30" height="32" viewBox="0 0 30 32">
    <defs>
      <linearGradient id="cp1" x1="0" y1="0" x2="1" y2="1"><stop offset="0" stopColor="#1f6fe0" /><stop offset=".45" stopColor="#8a3fe0" /><stop offset="1" stopColor="#f56a8a" /></linearGradient>
      <linearGradient id="cp2" x1="0" y1="1" x2="1" y2="0"><stop offset="0" stopColor="#f9a02a" /><stop offset=".5" stopColor="#4fd06b" /><stop offset="1" stopColor="#1f9cf0" /></linearGradient>
    </defs>
    <path d="M10 1h9c3 0 4 2 5 5l5 15c1 6-2 10-7 10h-9l3-5c2-3 1-6 0-9L13 8c-1-3-1-7-3-7z" fill="url(#cp1)" />
    <path d="M20 31h-9c-3 0-4-2-5-5L1 11C0 5 3 1 8 1h6l-4 5c-1 2-1 5 0 8l3 9c1 3 3 8 7 8z" fill="url(#cp2)" />
  </svg>
)
const EdgeIcon = () => (
  <svg width="32" height="36" viewBox="0 0 32 36">
    <defs><linearGradient id="ed" x1="0" y1="0" x2="1" y2="1"><stop offset="0" stopColor="#1f9fd8" /><stop offset="1" stopColor="#7fe04c" /></linearGradient></defs>
    <ellipse cx="16" cy="18" rx="16" ry="17.500" fill="url(#ed)" />
    <path d="M0 17C0 29 9 35.500 17 35.500c6 0 10-2 12-6-6 3-14 1-14-5 0-3 2-5 5-5.500 0-4-3-7-8-7-6 0-11 4-12 5z" fill="#0c59a4" />
    <path d="M19 24c3 0 8 0 11-3-1-5-5-6-9-5 1 3 0 6-2 8z" fill="#4cc3d9" />
  </svg>
)
const FolderIcon = () => (
  <svg width="28" height="30" viewBox="0 0 28 30"><path d="M0 2h11l2 3h-13z" fill="#d9a520" /><rect y="5" width="28" height="24" rx="1" fill="#fbd568" /><path d="M6 29V17h16v12h-5v-6h-6v6z" fill="#2b88d8" /></svg>
)
const PdfIcon = () => (
  <svg width="28" height="32" viewBox="0 0 28 32"><rect width="28" height="32" rx="3" fill="#b30b00" /><path d="M5 24c4-2 7-10 7-15 0-3-2-3-2 0 0 5 6 11 11 11 3 0 2-2 0-2-6 0-14 3-16 6z" fill="none" stroke="#fff" strokeWidth="1.300" /></svg>
)
const ExcelIcon = () => (
  <svg width="30" height="32" viewBox="0 0 30 32" overflow="visible"><rect x="7" y="0" width="23" height="32" fill="#21a366" /><rect x="18" y="8" width="12" height="8" fill="#33c481" /><rect x="7" y="16" width="11" height="16" fill="#107c41" /><rect x="18" y="16" width="12" height="16" fill="#185c37" /><rect y="9" width="15" height="15" rx="1" fill="#107c41" /><text x="7.500" y="21" textAnchor="middle" fontSize="12" fontWeight="700" fill="#fff" fontFamily="Liberation Sans">X</text></svg>
)
const WordBig = () => (
  <svg width="30" height="32" viewBox="0 0 30 32" overflow="visible"><rect x="7" y="0" width="23" height="32" fill="#2b7cd3" /><rect x="7" y="0" width="23" height="8" fill="#41a5ee" /><rect x="7" y="24" width="23" height="8" fill="#103f91" /><rect x="7" y="16" width="23" height="8" fill="#185abd" /><rect y="9" width="15" height="15" rx="1" fill="#185abd" /><text x="7.500" y="21" textAnchor="middle" fontSize="11" fontWeight="700" fill="#fff" fontFamily="Liberation Sans">W</text></svg>
)
const OutlookNew = () => (
  <svg width="32" height="34" viewBox="0 0 32 34" overflow="visible"><path d="M16 1l12 7v16H6V8z" fill="#0f78d4" /><rect y="10" width="15" height="15" rx="1" fill="#0f5fb8" /><text x="7.500" y="22" textAnchor="middle" fontSize="12" fontWeight="700" fill="#fff" fontFamily="Liberation Sans">O</text><circle cx="22" cy="24" r="10" fill="#5cc8f8" /><rect x="16" y="19" width="12" height="10" rx="1" fill="none" stroke="#111" strokeWidth="1.300" /><path d="M16 20l6 5 6-5" fill="none" stroke="#111" strokeWidth="1.200" /></svg>
)
const CalcIcon = () => (
  <svg width="24" height="36" viewBox="0 0 24 36"><rect width="24" height="36" rx="2" fill="#74808c" /><rect x="3" y="3" width="18" height="6" fill="#4fd0f0" /><g fill="#d9dde0"><rect x="3" y="12" width="5" height="5" /><rect x="9.500" y="12" width="5" height="5" /><rect x="16" y="12" width="5" height="5" /><rect x="3" y="19" width="5" height="5" /><rect x="9.500" y="19" width="5" height="5" /><rect x="3" y="26" width="5" height="5" /><rect x="9.500" y="26" width="5" height="5" /></g><rect x="16" y="19" width="5" height="14" fill="#103f91" /></svg>
)
const ChromeIcon = () => (
  <svg width="32" height="36" viewBox="-16 -18 32 36">
    <circle r="16" fill="#34a853" transform="scale(1 1.100)" />
    <path d="M-14-8A16 17.600 0 0 1 14-8H0z" fill="#ea4335" /><path d="M14-8A16 17.600 0 0 1 2 17.500L7 5z" fill="#fbbc05" />
    <circle r="8" fill="#fff" transform="scale(1 1.100)" /><circle r="6" fill="#4285f4" transform="scale(1 1.100)" />
  </svg>
)
const TeamsIcon = () => (
  <svg width="32" height="30" viewBox="0 0 32 30" overflow="visible"><circle cx="17" cy="5" r="5" fill="#7b83eb" /><circle cx="27" cy="7" r="3.500" fill="#5059c9" /><path d="M21 12h10v10c0 3-3 5-6 5h-4z" fill="#5059c9" /><path d="M9 11h16v12c0 4-3 6-8 6s-8-3-8-6z" fill="#7b83eb" /><rect y="8" width="17" height="17" rx="1" fill="#4b53bc" /><text x="8.500" y="21" textAnchor="middle" fontSize="12" fontWeight="700" fill="#fff" fontFamily="Liberation Sans">T</text></svg>
)

const TASK = [
  [OutlookIcon, 'w-[58px]', true], [CopilotIcon, 'w-[58px]', false], [EdgeIcon, 'w-[58px]', false], [FolderIcon, 'w-[58px]', true],
  [PdfIcon, 'w-[57px]', false], [ExcelIcon, 'w-[56px]', true], [WordBig, 'w-[57px]', true], [OutlookNew, 'w-[58px]', true],
  [CalcIcon, 'w-[56px]', true], [ChromeIcon, 'w-[56px]', true], [TeamsIcon, 'w-[57px]', true],
]

const Taskbar = () => (
  <div className="flex h-[49px] shrink-0 items-center bg-[#e7e3dc]">
    <svg className="ml-[20px]" width="20" height="20" viewBox="0 0 20 20" fill="#111"><path d="M0 2.500L9 1.300V9.500H0zM10 1.200L20 0v9.500H10zM0 10.500h9v8.200L0 17.500zM10 10.500h10V20L10 18.800z" /></svg>
    <div className="ml-[20px] flex h-[49px] w-[360px] items-center border border-[#d5d5d5] bg-white pl-[15px]">
      <svg width="22" height="24" viewBox="0 0 22 24" fill="none" stroke="#222" strokeWidth="1.300"><circle cx="13" cy="9" r="7.500" /><path d="M8 15l-6.500 7.500" /></svg>
      <span className="ml-[11px] w-[163px] whitespace-nowrap text-[18px] text-[#333]">Type here to search</span>
      <svg className="ml-[55px]" width="76" height="36" viewBox="0 0 76 36">
        <path d="M32 0c2 10 5 13 13 15-8 2-11 6-13 16-2-10-5-14-12-16 7-2 10-5 12-15z" fill="#f5b622" />
        <path d="M57 13c1 5 2 6 6 7-4 1-5 3-6 8-1-5-2-7-6-8 4-1 5-2 6-7z" fill="#f5b622" />
        <path d="M5 21c1 3 2 4 4 5-2 1-3 2-4 5-1-3-2-4-4-5 2-1 3-2 4-5z" fill="#2b9cf0" />
        <circle cx="50" cy="3" r="2.500" fill="#ee6a3c" /><circle cx="72" cy="29" r="2.500" fill="#8bc34a" />
      </svg>
    </div>
    <div className="flex w-[63px] items-center justify-center pr-[3px]">
      <svg width="20" height="26" viewBox="0 0 20 26" fill="none" stroke="#222" strokeWidth="1.300"><path d="M1 1h12M1 25h12M1 7h12v12H1zM18 5v3M18 11v4M18 18v3" /></svg>
    </div>
    {TASK.map(([Icon, w, on], i) => (
      <div key={i} className={clsx('flex h-full shrink-0 flex-col items-center', w, i === 6 && 'bg-[#f3f1ed]')}>
        <div className="flex h-[46px] items-center"><Icon /></div>
        <div className={clsx('h-[3px] w-[47px]', on && 'bg-[#f7841c]')} />
      </div>
    ))}
    <div className="ml-[33px] flex items-start">
      <div className="relative h-[34px] w-[32px]">
        <svg width="32" height="22" viewBox="0 0 32 22" className="absolute bottom-0"><path d="M6 21a6 6 0 0 1 0-12 9 9 0 0 1 17-2 7 7 0 0 1 2 14z" fill="#a9c8ec" stroke="#cfe0f4" /></svg>
        <div className="absolute left-[15px] top-0 flex h-[15px] w-[15px] items-center justify-center rounded-full bg-[#b3261e] text-[11px] text-white">1</div>
      </div>
    </div>
    <span className="ml-[10px] w-[40px] whitespace-nowrap text-[17px] text-[#222]">16°C</span>
    <svg className="ml-[27px]" width="16" height="10" viewBox="0 0 16 10" fill="none" stroke="#222"><path d="M1 9l7-8 7 8" /></svg>
    <svg className="ml-[16px]" width="14" height="26" viewBox="0 0 14 26" fill="none" stroke="#222"><rect x=".5" y="6" width="9" height="13" rx="2" /><path d="M10 10l3-2v9l-3-2M3 2h5M3 24h5" /></svg>
    <svg className="ml-[13px]" width="20" height="14" viewBox="0 0 20 14"><rect x="3" y="1" width="16" height="12" rx="1" fill="#222" /><path d="M0 4h3M0 9h3" stroke="#222" /></svg>
    <svg className="ml-[13px]" width="18" height="18" viewBox="0 0 18 18" fill="none" stroke="#222"><path d="M1 12A12 12 0 0 1 15 1M5 14a8 8 0 0 1 10-9M9 15a4 4 0 0 1 6-5" /><circle cx="15" cy="15" r="1.500" fill="#222" /></svg>
    <svg className="ml-[8px]" width="22" height="20" viewBox="0 0 22 20" fill="none" stroke="#222"><path d="M1 7h4l5-5v16l-5-5H1zM13 7c2 2 2 4 0 6M16 4c3 4 3 8 0 12" /></svg>
    <span className="ml-[11px] w-[32px] text-[14px] text-[#222]">ENG</span>
    <div className="ml-[13px] w-[76px] text-center text-[14px] leading-[23px] text-[#222]">
      <div>11:20</div><div>30/04/2025</div>
    </div>
    <div className="relative ml-[23px] h-[30px] w-[30px]">
      <div className="flex h-[24px] w-[20px] flex-col justify-center gap-[3px] rounded-[1px] bg-black px-[3px]">
        <div className="h-px bg-white" /><div className="h-px bg-white" /><div className="h-px bg-white" />
      </div>
      <div className="absolute left-[5px] top-[12px] flex h-[24px] w-[24px] items-center justify-center rounded-full border border-[#777] bg-[#d8d5d0] text-[13px] text-[#222]">43</div>
    </div>
  </div>
)

export default function App() {
  return (
    <div className={clsx('flex h-[900px] w-[1600px] flex-col overflow-hidden bg-[#efefef]', UI)}>
      <TitleBar />
      <Tabs />
      <Ribbon />
      <RulerRow />
      <DocArea />
      <StatusBar />
      <Taskbar />
    </div>
  )
}
